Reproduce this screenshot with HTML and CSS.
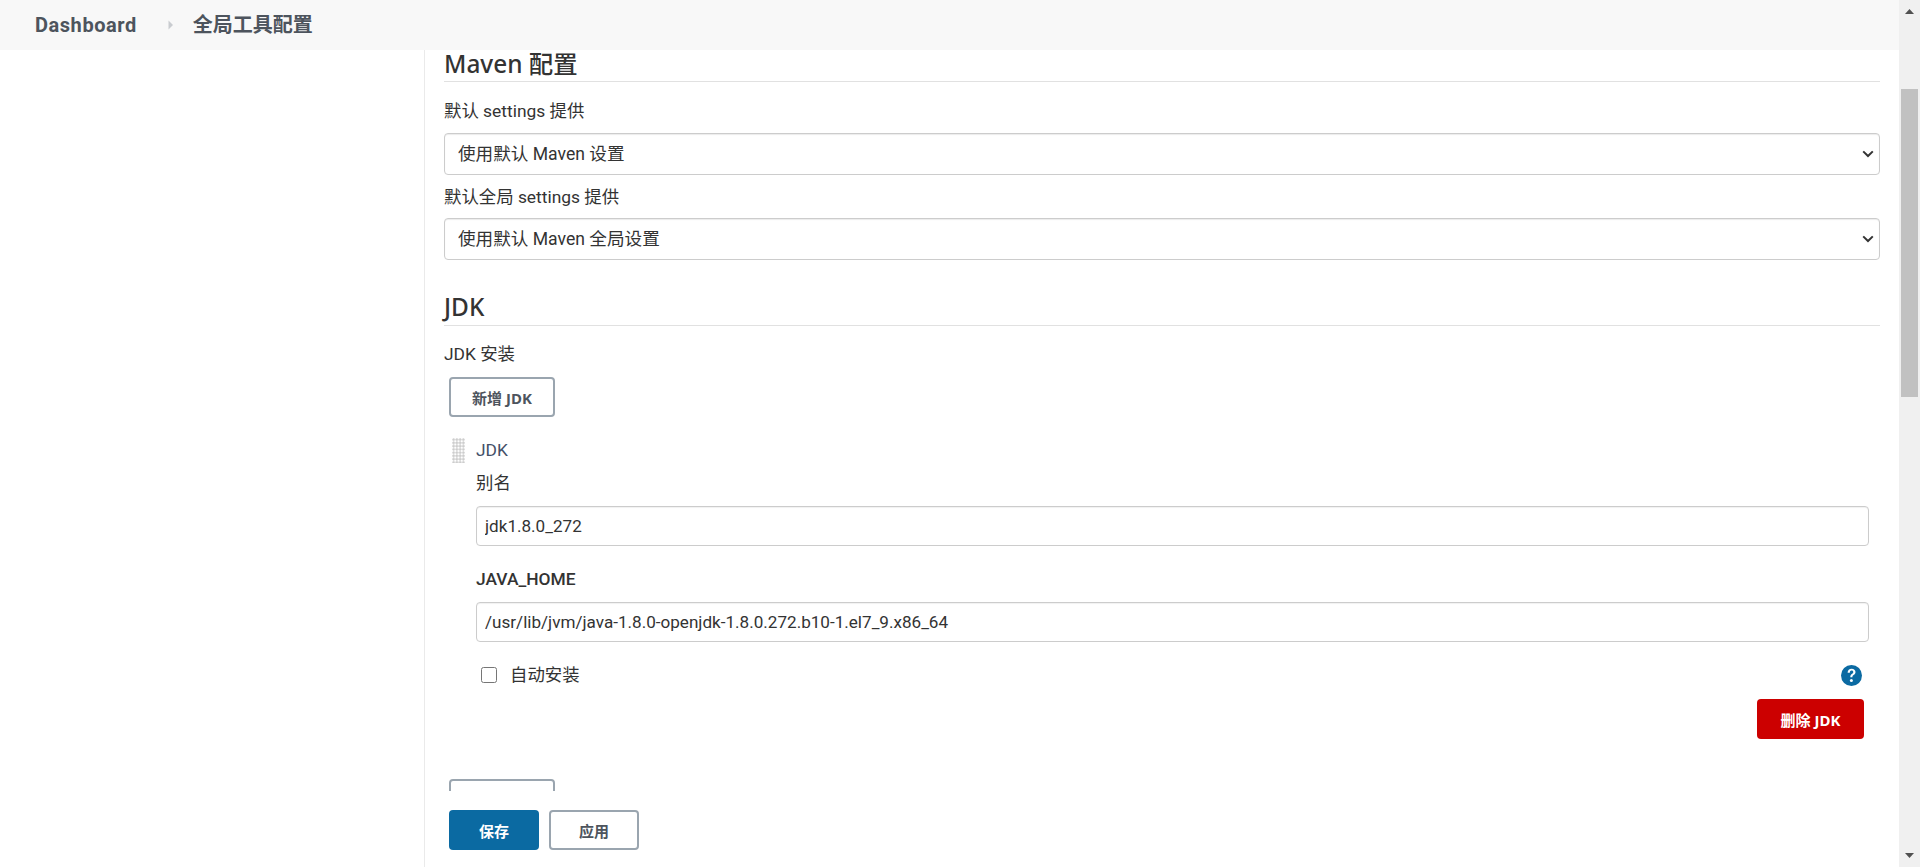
FILE: index.html
```html
<!DOCTYPE html>
<html lang="zh">
<head>
<meta charset="utf-8">
<title>全局工具配置</title>
<link rel="stylesheet" href="styles.css">
</head>
<body>
<div class="app">
  <div class="viewport">
    <nav class="crumbs">
      <a class="crumb crumb-root">Dashboard</a>
      <svg class="crumb-sep" width="6" height="10" viewBox="0 0 6 10"><path d="M0.5 0.5 L5 5 L0.5 9.5 Z" fill="#c9ccd0"/></svg>
      <a class="crumb">全局工具配置</a>
    </nav>
    <div class="layout">
      <aside class="side"></aside>
      <main class="content">
        <section class="sec-maven">
          <h2 class="sec-title">Maven 配置</h2>
          <div class="field-label first">默认 settings 提供</div>
          <div class="select-wrap">
            <select class="select"><option>使用默认 Maven 设置</option></select>
            <svg class="chevron" width="12" height="8" viewBox="0 0 12 8"><path d="M1.2 1.4 L6 6 L10.8 1.4" fill="none" stroke="#333" stroke-width="2"/></svg>
          </div>
          <div class="field-label tight">默认全局 settings 提供</div>
          <div class="select-wrap">
            <select class="select"><option>使用默认 Maven 全局设置</option></select>
            <svg class="chevron" width="12" height="8" viewBox="0 0 12 8"><path d="M1.2 1.4 L6 6 L10.8 1.4" fill="none" stroke="#333" stroke-width="2"/></svg>
          </div>
        </section>
        <section class="sec-jdk">
          <h2 class="sec-title">JDK</h2>
          <div class="field-label first-jdk">JDK 安装</div>
          <div class="btn-row"><button class="btn btn-outline btn-add">新增 JDK</button></div>
          <div class="repeat">
            <div class="handle"></div>
            <div class="repeat-body">
              <div class="repeat-title">JDK</div>
              <div class="sub-label">别名</div>
              <input class="text" type="text" value="jdk1.8.0_272">
              <div class="sub-label strong">JAVA_HOME</div>
              <input class="text" type="text" value="/usr/lib/jvm/java-1.8.0-openjdk-1.8.0.272.b10-1.el7_9.x86_64">
              <div class="check-row">
                <label class="check"><input type="checkbox"><span>自动安装</span></label>
                <svg class="help" width="21" height="21" viewBox="0 0 21 21"><circle cx="10.5" cy="10.5" r="10.5" fill="#0b6aa2"/><path d="M6.6 7.8c.1-2.6 1.700-4.100 4-4.100 2.300 0 3.900 1.400 3.900 3.300 0 1.400-.7 2.300-1.900 3.100-1 .7-1.200 1.100-1.200 2.100H9.300c0-1.600.5-2.500 1.600-3.200 1-.7 1.400-1.200 1.400-1.900 0-.9-.7-1.500-1.700-1.500-1.100 0-1.700.7-1.800 2.200Z" fill="#fff"/><circle cx="10.400" cy="15.500" r="1.500" fill="#fff"/></svg>
              </div>
              <div class="del-row"><button class="btn btn-danger">删除 JDK</button></div>
            </div>
          </div>
          <div class="btn-row next"><button class="btn btn-outline btn-add"></button></div>
        </section>
      </main>
    </div>
    <footer class="actions">
      <button class="btn btn-primary">保存</button>
      <button class="btn btn-outline btn-apply">应用</button>
    </footer>
  </div>
  <div class="scrollbar">
    <svg class="arrow" width="9" height="5" viewBox="0 0 9 5"><path d="M4.5 0 L9 5 L0 5 Z" fill="#505050"/></svg>
    <div class="track"><div class="thumb"></div></div>
    <svg class="arrow" width="9" height="5" viewBox="0 0 9 5"><path d="M0 0 L9 0 L4.5 5 Z" fill="#505050"/></svg>
  </div>
</div>
</body>
</html>
```
FILE: styles.css
```css
* { box-sizing: border-box; }
html, body { margin: 0; padding: 0; height: 867px; overflow: hidden; background: #fff; }
body { font-family: Roboto, "Noto Sans CJK SC", sans-serif; font-size: 17.4px; color: #333; }
.app { display: flex; height: 867px; }
.viewport { position: relative; flex: 1; min-width: 0; height: 867px; overflow: hidden; }

.crumbs { display: flex; align-items: center; height: 50px; padding-left: 35px; background: #f8f8f8; }
.crumb { font-size: 20px; font-weight: 700; color: #4d545d; line-height: 50px; }
.crumb-root { letter-spacing: .55px; }
.crumb-sep { margin: 0 19px 0 31px; }

.layout { display: flex; height: 817px; }
.side { width: 425px; flex: none; border-right: 1px solid #eaeaea; }
.content { flex: 1; min-width: 0; padding: 0 19px 0 19px; height: 817px; }

.sec-title { margin: 0; height: 32px; font-family: "Noto Sans", "Noto Sans CJK SC", sans-serif; font-size: 24.4px; font-weight: 500; line-height: 28px; color: #333; border-bottom: 1px solid #e1e1e1; }
.sec-jdk { margin-top: 33px; }
.sec-jdk .sec-title { height: 33px; }

.field-label { line-height: 24px; color: #333; }
.field-label.first { margin: 17px 0 10px; }
.field-label.first-jdk { margin: 16px 0 11px; }
.field-label.tight { margin: 10px 0 9px; }

.select-wrap { position: relative; height: 42px; }
.select { display: block; width: 100%; height: 42px; padding: 0 30px 0 13px; font: inherit; font-size: 17.6px; color: #333; background: #fff; border: 1px solid #ccc; border-radius: 4px; box-shadow: inset 0 1px 1px rgba(0,0,0,.08); appearance: none; }
.chevron { position: absolute; right: 6px; top: 17px; pointer-events: none; }

.btn { font-family: "Noto Sans", "Noto Sans CJK SC", sans-serif; font-size: 15px; font-weight: 700; height: 40px; border-radius: 4px; cursor: pointer; padding: 0; }
.btn-row { padding-left: 5px; }
.btn-add { width: 106px; display: block; }
.btn-outline { background: #fff; color: #4d545d; border: 2px solid #9aa5af; }
.btn-primary { width: 90px; background: #0b6aa2; color: #fff; border: 0; }
.btn-apply { width: 90px; }
.btn-danger { width: 107px; background: #c00; color: #fff; border: 0; }

.repeat { display: flex; margin-top: 21px; padding-left: 8px; padding-right: 11px; }
.handle { flex: none; width: 13px; height: 25px; margin-right: 11px; background-image: radial-gradient(circle, #cdcdcd 1.1px, transparent 1.6px); background-size: 3.25px 3.25px; }
.repeat-body { flex: 1; min-width: 0; display: flex; flex-direction: column; }
.repeat-title { line-height: 24px; color: #445068; }
.sub-label { line-height: 24px; margin: 9px 0 11px; color: #333; }
.sub-label.strong { font-weight: 500; margin: 21px 0 11px; }
.text { display: block; width: 100%; height: 40px; padding: 0 8px; font: inherit; font-size: 17.1px; color: #333; background: #fff; border: 1px solid #ccc; border-radius: 4px; box-shadow: inset 0 1px 1px rgba(0,0,0,.06); }

.check-row { display: flex; align-items: center; justify-content: space-between; height: 24px; margin-top: 21px; padding-left: 5px; padding-right: 7px; }
.check { display: flex; align-items: center; }
.check input { width: 16px; height: 16px; margin: 0 13px 0 0; }
.check span { line-height: 24px; }
.del-row { display: flex; justify-content: flex-end; margin-top: 12px; padding-right: 5px; }
.next { margin-top: 40px; }

.actions { position: absolute; left: 425px; right: 0; bottom: 0; height: 76px; display: flex; gap: 10px; padding: 19px 0 0 24px; background: #fff; }

.scrollbar { flex: none; width: 21px; height: 867px; background: #f0f0f0; display: flex; flex-direction: column; align-items: center; padding: 9px 0; }
.track { flex: 1; width: 100%; position: relative; }
.thumb { position: absolute; left: 2px; top: 75px; width: 17px; height: 308px; background: #c1c1c1; }
.arrow { flex: none; }
```
